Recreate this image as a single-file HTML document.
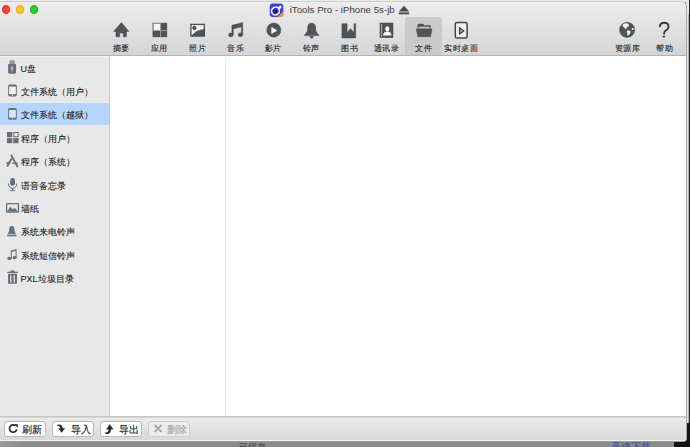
<!DOCTYPE html>
<html><head><meta charset="utf-8">
<style>
*{margin:0;padding:0;box-sizing:border-box}
html,body{width:690px;height:447px;overflow:hidden;background:linear-gradient(to right,#9c9c9c 0,#8a8a8a 24px,#8a8a8a 100%);font-family:"Liberation Sans",sans-serif}
body{position:relative}
div,span,svg{position:absolute}
#topout{left:0;top:0;width:690px;height:2px;background:#ececec}
#rstrip{left:686px;top:0;width:4px;height:447px;background:linear-gradient(to right,#e8e8e8 0,#e8e8e8 3px,#2a2a2a 3px)}
#rstrip2{left:686px;top:14px;width:4px;height:409px;background:linear-gradient(to right,#a8a8a8 0,#a8a8a8 1px,#e2e2e2 1px,#e2e2e2 2px,#b0b0b0 2px,#b0b0b0 3px,#262626 3px)}
#rblack{left:674px;top:423px;width:16px;height:24px;background:#151515;border-radius:0 0 0 0}
#win{left:-10px;top:1px;width:697px;height:441px;border-radius:0 6px 4px 0;background:#e6e6e6;border:1px solid #a8a8a8;border-top-color:#cdcdcd;border-bottom-color:#9c9c9c}
#toolbar{left:0;top:2px;width:686px;height:54px;background:linear-gradient(#f2f2f0 0,#ececec 1px,#d5d5d5 100%);border-bottom:1px solid #b4b4b4;border-radius:0 5px 0 0}
.tl{width:8.6px;height:8.6px;border-radius:50%;top:5.2px}
#title{left:289.7px;top:4px;font-size:9.7px;line-height:12px;color:#3c3c3c;white-space:nowrap}
.ti{top:17px;height:38px}
.ti svg{filter:drop-shadow(0 0.6px 0 rgba(255,255,255,.9))}
.lb{top:43.5px;color:#222;-webkit-text-stroke:0.15px #333;width:40px;text-align:center;font-size:8px;letter-spacing:0.5px;text-indent:0.5px;line-height:10px;white-space:nowrap}
#sel{left:405px;top:17px;width:37px;height:38px;background:#cacaca;border-radius:3px 3px 0 0}
#side{left:0;top:56px;width:109px;height:360px;background:#e8e8e8;box-shadow:inset 0 1px 0 #f2f2f2}
#sdiv{left:109px;top:56px;width:1px;height:360px;background:#cbcbcb}
#list{left:110px;top:56px;width:576px;height:360px;background:#fff}
#ldiv{left:225px;top:57px;width:1px;height:359px;background:#ececec}
#ssel{left:0;top:103px;width:109px;height:22px;background:#b5d5fc}
.sl{left:20.5px;font-size:9px;-webkit-text-stroke:0.1px #222;line-height:12px;color:#222;white-space:nowrap}
.sico{left:0;width:22px;height:16px}
#bbar{left:0;top:416px;width:686px;height:25px;background:linear-gradient(#ececec,#d8d8d8);border-top:1px solid #c6c6c6;box-shadow:inset 0 -1px 0 #f4f4f4,inset 0 1px 0 #d6d6d6;border-radius:0 0 3px 0}
.btn{top:421px;height:16px;border:1px solid #b8b8b8;border-radius:3px;background:#fff}
.bl{top:423.5px;font-size:9.5px;-webkit-text-stroke:0.15px currentColor;line-height:11px;color:#222;white-space:nowrap}
</style></head><body>
<div id="topout"></div>
<div id="rstrip"></div>
<div id="rstrip2"></div>
<div id="rblack"></div>
<div id="win"></div>
<div id="toolbar"></div>
<div class="tl" style="left:1.9px;background:#fd4038;border:0.8px solid #e0302a"></div>
<div class="tl" style="left:15.6px;background:#fec22a;border:0.8px solid #e5a617"></div>
<div class="tl" style="left:29.5px;background:#27cf35;border:0.8px solid #16b021"></div>

<!-- app icon -->
<svg style="left:269px;top:3px" width="15" height="15" viewBox="0 0 15 15">
  <defs><clipPath id="rc"><rect x="0.7" y="0.5" width="13.6" height="13.6" rx="3"/></clipPath></defs>
  <g clip-path="url(#rc)">
    <rect x="0" y="0" width="15" height="15" fill="#3b40e2"/>
    <path d="M15 7.5 L15 15 L7.5 15 Z" fill="#f7951e"/>
  </g>
  <path d="M8.6 4.6 L11.4 2.6 L12.8 4 L10.8 6.6 Z" fill="#fff"/>
  <ellipse cx="6.5" cy="8.1" rx="4" ry="3.8" transform="rotate(-35 6.5 8.1)" fill="none" stroke="#fff" stroke-width="1.5"/>
  <circle cx="6.3" cy="8.3" r="2.1" fill="#151520"/>
  <circle cx="5.6" cy="8.6" r="0.5" fill="#bbb"/>
</svg>
<div id="title">iTools Pro - iPhone 5s-jb</div>
<svg style="left:398px;top:5px" width="12" height="10" viewBox="0 0 12 10">
  <path d="M6 0.8 L11.2 6.6 L0.8 6.6 Z" fill="#4a4a4a"/>
  <rect x="0.8" y="7.4" width="10.4" height="1.9" fill="#4a4a4a"/>
</svg>

<div id="sel"></div>

<!-- toolbar icons; coordinates absolute in page -->
<svg style="left:105px;top:17px" width="370" height="25" viewBox="105 17 370 25">
 <g fill="#4e5457" stroke="#3a3f42" stroke-width="0.5" style="filter:drop-shadow(0 0.7px 0 rgba(255,255,255,.85))">
  <!-- home -->
  <path d="M121.4 22.6 L129 31.4 L126.4 31.4 L126.4 36.8 L123.2 36.8 L123.2 33 L119.7 33 L119.7 36.8 L116 36.8 L116 31.4 L113.6 31.4 Z"/>
  <!-- apps -->
  <rect x="152.9" y="23.1" width="14" height="13.8"/>
  <rect x="153.5" y="23.6" width="6.6" height="6.7" fill="#f4f4f4" stroke="none"/>
  <rect x="160.1" y="23" width="0.7" height="14" fill="#b0b4b6" stroke="none"/>
  <rect x="152.8" y="30.3" width="14.2" height="0.7" fill="#b0b4b6" stroke="none"/>
  <!-- photo -->
  <rect x="190.9" y="24.4" width="13.4" height="11.6" fill="#fcfcfc" stroke="#4a5052" stroke-width="1.4"/>
  <path d="M191.8 36 C193.6 32.8 197.4 30.2 204.4 29.3 L204.4 36 Z"/>
  <circle cx="194.4" cy="27.9" r="1.9"/>
  <rect x="198" y="25.6" width="5.6" height="1.6" fill="#dcdcdc" stroke="none"/>
  <!-- music -->
  <path d="M231.9 25.3 L242.7 22.6 L242.7 34.8 L241.3 34.8 L241.3 26.8 L233.3 28.9 L233.3 34.8 L231.9 34.8 Z"/>
  <ellipse cx="230.8" cy="34.9" rx="2.3" ry="1.9"/>
  <ellipse cx="240.4" cy="34.8" rx="2.3" ry="1.9"/>
  <!-- play -->
  <circle cx="273.8" cy="30.1" r="7.1"/>
  <path d="M271.4 26.9 L277.4 30.4 L271.4 34 Z" fill="#fafafa" stroke="none"/>
  <!-- bell -->
  <path d="M311.6 23.2 C308.4 23.2 307.7 25 307.7 28 C307.7 31 306.8 32.7 305 34.3 C304.5 34.8 304.4 35.2 304.4 35.6 L318.9 35.6 C318.9 35.2 318.8 34.8 318.3 34.3 C316.5 32.7 315.6 31 315.6 28 C315.6 25 314.8 23.2 311.6 23.2 Z"/>
  <path d="M309.9 36.3 L313.4 36.3 C313.4 37.5 312.6 38.2 311.65 38.2 C310.7 38.2 309.9 37.5 309.9 36.3 Z"/>
  <!-- book -->
  <path d="M341.9 23.7 L347.1 23.7 L347.1 32.4 L350.6 28.7 L354 32.4 L354 23.7 L355.7 23.7 L355.7 38 L341.9 38 Z"/>
  <!-- contacts -->
  <rect x="380" y="23" width="13" height="14.7"/>
  <rect x="381.2" y="24" width="0.6" height="13" fill="#e8e8e8" stroke="none"/>
  <ellipse cx="387.3" cy="28.8" rx="2.1" ry="2.6" fill="#fafafa" stroke="none"/>
  <path d="M383 35.6 C383 32.8 385 32 386.3 31.6 L388.3 31.6 C389.6 32 391.4 32.8 391.4 35.6 Z" fill="#fafafa" stroke="none"/>
  <!-- folder -->
  <path d="M417.8 27.4 L417.8 24.8 Q417.8 24 418.6 24 L423.2 24 L424.3 25.4 L429.8 25.4 Q430.6 25.4 430.6 26.2 L430.6 27.4 L429.4 27.4 L429.4 26.6 L419 26.6 L419 27.4 Z"/>
  <path d="M416.2 28.8 L432 28.8 L430.6 36.8 L417.8 36.8 Z"/>
  <!-- realtime desktop -->
  <rect x="455.3" y="22.4" width="11.8" height="15.6" rx="1.6" fill="#efefef" stroke="#3e4346" stroke-width="1.5"/>
  <path d="M459.5 27.7 L463.9 30.9 L459.5 34.1 Z" fill="#a8abad" stroke="#3e4346" stroke-width="1.2" stroke-linejoin="round"/>
 </g>
</svg>
<svg style="left:610px;top:17px" width="70" height="25" viewBox="610 17 70 25">
 <g style="filter:drop-shadow(0 0.7px 0 rgba(255,255,255,.85))">
  <circle cx="627.1" cy="29.8" r="7.6" fill="#4e5457" stroke="#3a3f42" stroke-width="0.5"/>
  <path d="M622.3 25.2 L623.3 23.9 L625.2 23.2 L627.5 23.4 L629 24.5 L628.6 26.1 L627.4 27.1 L626.4 28.5 L625.4 29 L624.6 27.9 L623.5 26.9 Z" fill="#f4f4f4"/>
  <path d="M627.1 30.4 L629.3 30.6 L630.6 31.8 L630 33.4 L628.8 35 L627.8 35.8 L627.2 35 L627.4 33.4 L626.9 31.8 Z" fill="#f4f4f4"/>
  <circle cx="632.7" cy="29.1" r="1" fill="#f4f4f4"/>
  <path d="M659.9 26.2 C660.2 23.8 661.8 22.7 664 22.7 C666.8 22.7 668.6 24.4 668.6 26.8 C668.6 29.4 666.6 30 665 31 C664.2 31.6 664.1 32.4 664.1 33.8" fill="none" stroke="#383d40" stroke-width="2" stroke-linecap="round"/>
  <circle cx="663.9" cy="36.6" r="1.2" fill="#383d40"/>
 </g>
</svg>

<span class="lb" style="left:101.0px">摘要</span>
<span class="lb" style="left:139.0px">应用</span>
<span class="lb" style="left:177.3px">照片</span>
<span class="lb" style="left:215.5px">音乐</span>
<span class="lb" style="left:253.0px">影片</span>
<span class="lb" style="left:291.0px">铃声</span>
<span class="lb" style="left:329.5px">图书</span>
<span class="lb" style="left:366.0px">通讯录</span>
<span class="lb" style="left:403.3px">文件</span>
<span class="lb" style="left:441.0px">实时桌面</span>
<span class="lb" style="left:607.0px">资源库</span>
<span class="lb" style="left:644.4px">帮助</span>

<div id="side"></div>
<div id="sdiv"></div>
<div id="list"></div>
<div id="ldiv"></div>
<div id="ssel"></div>

<svg style="left:0;top:56px" width="22" height="235" viewBox="0 56 22 235">
 <g fill="#666f79">
  <!-- usb -->
  <rect x="9.6" y="60.4" width="5" height="3.2" rx="0.5"/>
  <rect x="10.6" y="61.2" width="1" height="1.2" fill="#e8e8e8"/>
  <rect x="12.6" y="61.2" width="1" height="1.2" fill="#e8e8e8"/>
  <rect x="8.1" y="63.8" width="8" height="9.9" rx="1.4"/>
  <path d="M12.1 65.8 L12.1 71.5 M10.6 67.6 L12.1 69.2 L13.6 68.2" stroke="#e8e8e8" stroke-width="0.7" fill="none"/>
  <!-- phone 1 -->
  <rect x="8.2" y="84.6" width="8.6" height="11.8" rx="1.6"/>
  <rect x="9.2" y="86.6" width="6.6" height="7.6" fill="#f2f2f2"/>
  <circle cx="12.5" cy="95.3" r="0.6" fill="#e8e8e8"/>
  <!-- phone 2 -->
  <rect x="8.2" y="108" width="8.6" height="11.8" rx="1.6"/>
  <rect x="9.2" y="110" width="6.6" height="7.6" fill="#d8e8fc"/>
  <circle cx="12.5" cy="118.7" r="0.6" fill="#d8e8fc"/>
  <!-- grid -->
  <rect x="7" y="132" width="5.3" height="5.2"/>
  <rect x="13.3" y="132" width="5.3" height="5.2"/>
  <rect x="14.3" y="133" width="3.3" height="3.2" fill="#f0f0f0"/>
  <rect x="7" y="138.1" width="5.3" height="5.1"/>
  <rect x="13.3" y="138.1" width="5.3" height="5.1"/>
  <!-- app store A -->
  <path d="M11.4 155.4 L17.2 166.4" stroke="#666f79" stroke-width="1.9" stroke-linecap="round" fill="none"/>
  <path d="M11.2 159.2 L7.6 165.8" stroke="#666f79" stroke-width="1.9" stroke-linecap="round" fill="none"/>
  <path d="M6.2 163 L10.2 163 M12.2 163.2 L14.6 163.2 M15.8 163.4 L17.8 163.4" stroke="#666f79" stroke-width="1.6" fill="none"/>
  <!-- mic -->
  <rect x="10.2" y="178" width="4.8" height="7.8" rx="2.4"/>
  <path d="M8.4 183.4 C8.4 186.8 10.4 188.4 12.6 188.4 C14.8 188.4 16.8 186.8 16.8 183.4" fill="none" stroke="#666f79" stroke-width="1"/>
  <rect x="12.1" y="188.4" width="1" height="2"/>
  <rect x="10" y="190.2" width="5.2" height="0.9"/>
  <!-- wallpaper -->
  <rect x="6.6" y="203.6" width="11.8" height="8.4" rx="0.6" fill="none" stroke="#666f79" stroke-width="1.3"/>
  <path d="M7.4 211.2 L10.4 206.4 L12.6 209.4 L14.6 207.8 L17.6 211.2 Z"/>
  <!-- bell -->
  <path d="M11.8 226 C9.6 226 9.2 227.6 9.2 229.6 C9.2 231.8 8.4 233.2 7.2 234.3 L16.4 234.3 C15.2 233.2 14.4 231.8 14.4 229.6 C14.4 227.6 14 226 11.8 226 Z"/>
  <rect x="7" y="235" width="9.6" height="1.3" rx="0.5"/>
  <!-- note -->
  <path d="M10.8 250.6 L16.6 249 L16.6 257.6 L15.6 257.6 L15.6 250.8 L11.8 251.8 L11.8 258.6 L10.8 258.6 Z"/>
  <ellipse cx="9.4" cy="258.4" rx="2.1" ry="1.7"/>
  <ellipse cx="14.6" cy="257.6" rx="2.1" ry="1.7"/>
  <!-- trash -->
  <rect x="7.2" y="271.8" width="10.6" height="1.3" rx="0.4"/>
  <rect x="10.4" y="270.6" width="4.2" height="1.6" rx="0.4"/>
  <rect x="8" y="273.8" width="9" height="10" rx="1"/>
  <rect x="10.2" y="275.2" width="1.2" height="7.4" fill="#e8e8e8"/>
  <rect x="13.6" y="275.2" width="1.2" height="7.4" fill="#e8e8e8"/>
 </g>
</svg>

<span class="sl" style="top:63px">U盘</span>
<span class="sl" style="top:86px">文件系统（用户）</span>
<span class="sl" style="top:109px">文件系统（越狱）</span>
<span class="sl" style="top:133px">程序（用户）</span>
<span class="sl" style="top:156px">程序（系统）</span>
<span class="sl" style="top:180px">语音备忘录</span>
<span class="sl" style="top:203px">墙纸</span>
<span class="sl" style="top:226px">系统来电铃声</span>
<span class="sl" style="top:250px">系统短信铃声</span>
<span class="sl" style="top:273px">PXL垃圾目录</span>

<div id="bbar"></div>
<div class="btn" style="left:4px;width:42px"></div>
<div class="btn" style="left:52px;width:42px"></div>
<div class="btn" style="left:100px;width:42px"></div>
<div class="btn" style="left:148px;width:42px;background:#ececec;border-color:#cfcfcf"></div>
<svg style="left:0;top:418px" width="200" height="20" viewBox="0 418 200 20">
  <path d="M15.5 425.6 A3.7 3.7 0 1 0 16.8 429.4" fill="none" stroke="#2a2a2a" stroke-width="1.7"/>
  <path d="M14.4 424.2 L17.9 424.2 L17.9 427.7 Z" fill="#2a2a2a"/>
  <path d="M56.6 426.4 C58.2 423.6 62.4 423.8 62.8 428.2 L65.2 428.2 L61.6 432.8 L58.2 428.2 L60.4 428.2 C60.2 426.2 58.4 425.4 56.6 426.4 Z" fill="#2a2a2a"/>
  <path d="M104.8 432.4 C106.4 435 110.8 434.4 111 429.4 L113.6 429.4 L109.8 424.2 L106 429.4 L108.6 429.4 C108.6 431.6 107 432.8 104.8 432.4 Z" fill="#2a2a2a"/>
  <path d="M154.6 425 L161.6 432 M161.6 425 L154.6 432" stroke="#a8a8a8" stroke-width="1.8"/>
</svg>
<span class="bl" style="left:21.5px">刷新</span>
<span class="bl" style="left:70.5px">导入</span>
<span class="bl" style="left:118.5px">导出</span>
<span class="bl" style="left:166.5px;color:#a8a8a8">删除</span>

<span style="left:239px;top:441px;font-size:9px;color:#3a3a3a">已保存</span>
<span style="left:611px;top:441px;font-size:9.5px;color:#2c4a9a">高速下载</span>
</body></html>
